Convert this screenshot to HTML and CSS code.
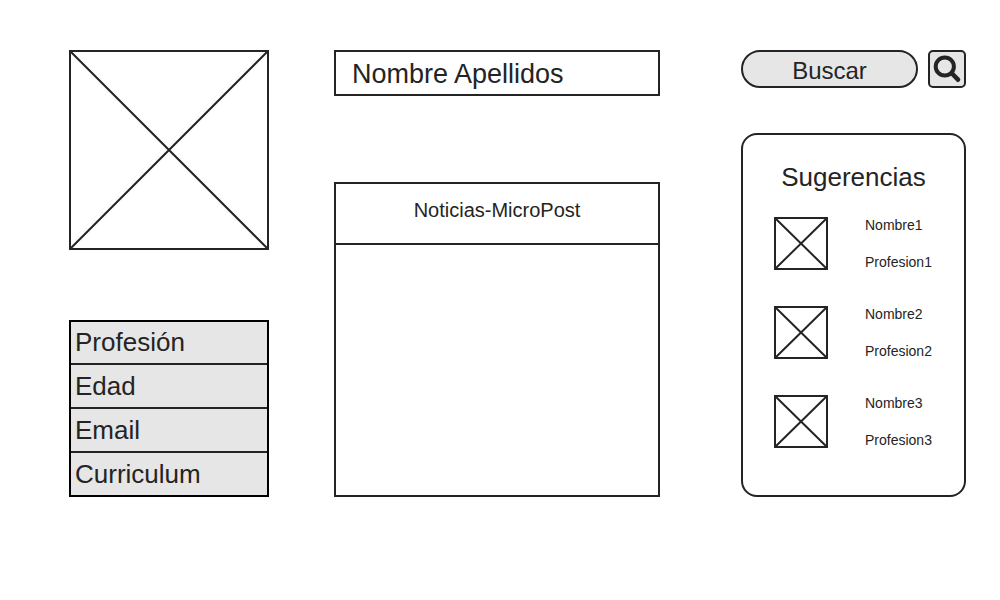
FILE: index.html
```html
<!DOCTYPE html>
<html lang="es">
<head>
<meta charset="utf-8">
<meta name="viewport" content="width=device-width, initial-scale=1">
<title>Perfil</title>
<link rel="stylesheet" href="styles.css">
</head>
<body>
<div class="page">
  <aside class="column profile">
    <svg class="photo" viewBox="0 0 200 200" role="img" aria-label="Foto de perfil">
      <path d="M1 1H199V199H1ZL199 199M199 1L1 199"/>
    </svg>
    <ul class="details">
      <li class="detail">Profesión</li>
      <li class="detail">Edad</li>
      <li class="detail">Email</li>
      <li class="detail">Curriculum</li>
    </ul>
  </aside>

  <main class="column content">
    <h1 class="name">Nombre Apellidos</h1>
    <section class="news">
      <h2 class="news-title">Noticias-MicroPost</h2>
    </section>
  </main>

  <aside class="column side">
    <form class="search" role="search">
      <input class="search-field" type="text" placeholder="Buscar" aria-label="Buscar">
      <button class="search-button" type="button" aria-label="Iniciar búsqueda">
        <svg class="search-icon" viewBox="0 0 34 34" aria-hidden="true">
          <circle cx="14.8" cy="14.5" r="9.1" stroke-width="4"/>
          <path d="M22 21.5L28 27.7" stroke-width="4.6"/>
        </svg>
      </button>
    </form>
    <section class="suggestions">
      <h2 class="suggestions-title">Sugerencias</h2>
      <ul class="people">
        <li class="person">
          <svg class="thumb" viewBox="0 0 54 53" aria-hidden="true"><path d="M1 1H53V52H1ZL53 52M53 1L1 52"/></svg>
          <div class="person-text"><span>Nombre1</span><span>Profesion1</span></div>
        </li>
        <li class="person">
          <svg class="thumb" viewBox="0 0 54 53" aria-hidden="true"><path d="M1 1H53V52H1ZL53 52M53 1L1 52"/></svg>
          <div class="person-text"><span>Nombre2</span><span>Profesion2</span></div>
        </li>
        <li class="person">
          <svg class="thumb" viewBox="0 0 54 53" aria-hidden="true"><path d="M1 1H53V52H1ZL53 52M53 1L1 52"/></svg>
          <div class="person-text"><span>Nombre3</span><span>Profesion3</span></div>
        </li>
      </ul>
    </section>
  </aside>
</div>
</body>
</html>
```
FILE: styles.css
```css
:root {
  --ink: #242424;
  --fill: #e6e6e6;
}

* {
  box-sizing: border-box;
}

body {
  margin: 0;
  background: #fff;
  color: var(--ink);
  font-family: "Liberation Sans", Arial, sans-serif;
}

h1,
h2,
ul {
  margin: 0;
  padding: 0;
  font-weight: 400;
  list-style: none;
}

.page {
  display: grid;
  grid-template-columns: 200px minmax(0, 1fr) 225px;
  padding: 50px 34px 50px 69px;
}

.column {
  display: flex;
  flex-direction: column;
}

.photo,
.thumb {
  display: block;
  fill: none;
  stroke: var(--ink);
  stroke-width: 2;
}

.photo {
  width: 100%;
}

.details {
  margin-top: 70px;
  border: 2px solid #000;
  background: var(--fill);
}

.detail {
  padding: 6px 4px;
  font-size: 26px;
  line-height: 30px;
}

.detail:first-child {
  padding-top: 5px;
}

.detail + .detail {
  border-top: 2px solid var(--ink);
}

.content {
  margin: 0 81px 0 65px;
}

.name {
  padding: 5px 16px 3px;
  border: 2px solid var(--ink);
  font-size: 27px;
  line-height: 34px;
}

.news {
  flex: 1;
  margin-top: 86px;
  border: 2px solid var(--ink);
}

.news-title {
  padding: 14px 16px 21px;
  border-bottom: 2px solid var(--ink);
  font-size: 20px;
  line-height: 24px;
  text-align: center;
}

.search {
  display: flex;
  gap: 10px;
}

.search-field {
  flex: 1;
  min-width: 0;
  height: 38px;
  padding: 4px 16px 0;
  border: 2px solid var(--ink);
  border-radius: 19px;
  background: var(--fill);
  color: var(--ink);
  font-family: inherit;
  font-size: 24px;
  text-align: center;
}

.search-field::placeholder {
  color: var(--ink);
  opacity: 1;
}

.search-button {
  width: 38px;
  height: 38px;
  padding: 0;
  border: 2px solid var(--ink);
  border-radius: 5px;
  background: var(--fill);
}

.search-icon {
  display: block;
  fill: none;
  stroke: var(--ink);
  stroke-linecap: round;
}

.suggestions {
  flex: 1;
  margin-top: 45px;
  padding: 26px 31px 46px;
  border: 2px solid var(--ink);
  border-radius: 16px;
}

.suggestions-title {
  font-size: 26px;
  line-height: 32px;
  text-align: center;
}

.people {
  display: grid;
  gap: 36px;
  margin-top: 24px;
}

.person {
  display: flex;
  gap: 37px;
}

.thumb {
  flex: none;
  width: 54px;
  height: 53px;
}

.person-text {
  display: flex;
  flex-direction: column;
  justify-content: space-between;
  font-size: 14px;
  line-height: 16px;
}
```
